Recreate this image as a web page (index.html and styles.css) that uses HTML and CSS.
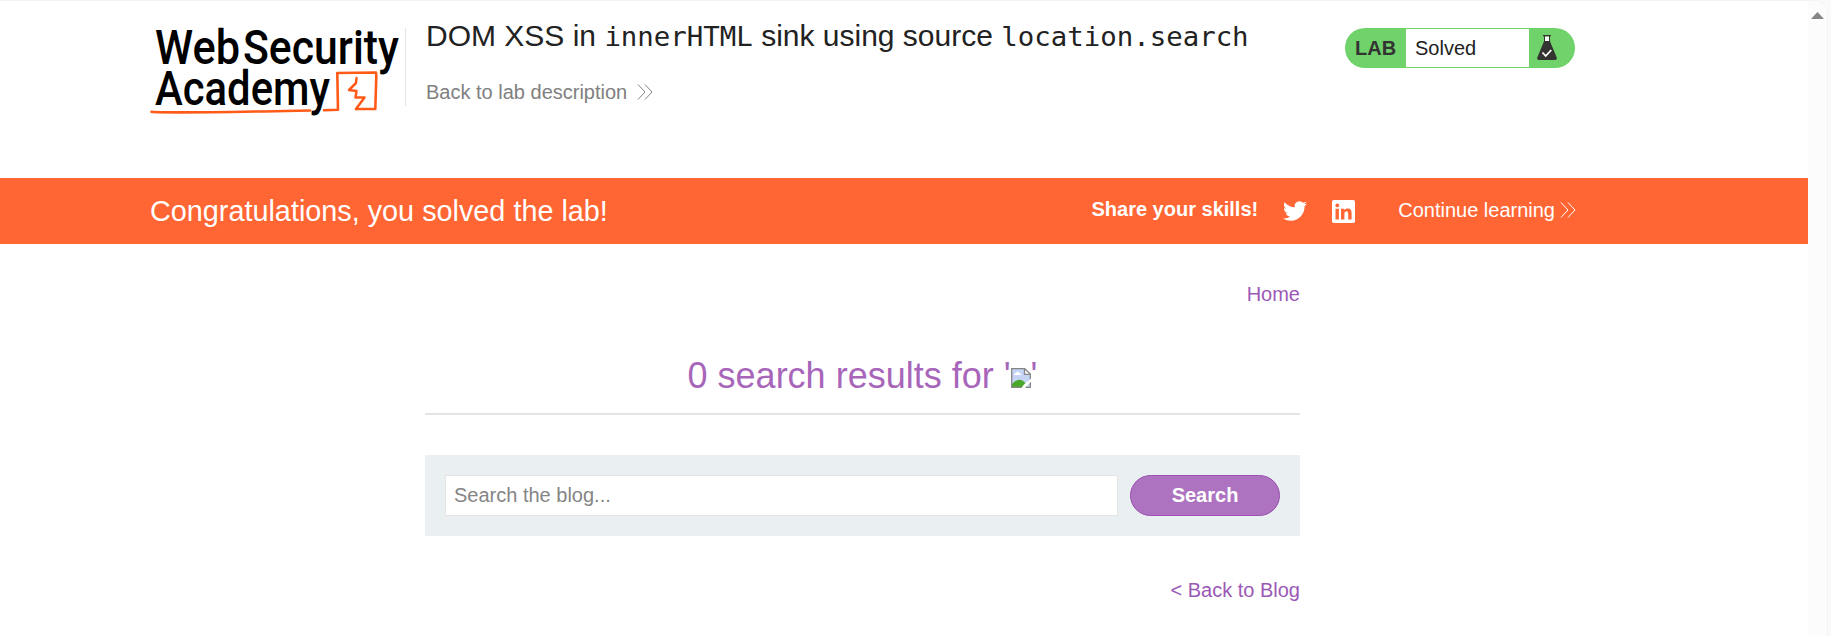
FILE: index.html
```html
<!DOCTYPE html>
<html lang="en">
<head>
<meta charset="utf-8">
<title>DOM XSS in innerHTML sink using source location.search</title>
<link rel="stylesheet" href="styles.css">
</head>
<body>
<div class="window">
  <div class="page">
    <header class="header">
      <svg class="logo" width="255" height="100" viewBox="150 20 255 100" role="img" aria-label="Web Security Academy">
        <g class="logo-text">
          <text x="155" y="64" textLength="85" lengthAdjust="spacingAndGlyphs">Web</text>
          <text x="243" y="64" textLength="156" lengthAdjust="spacingAndGlyphs">Security</text>
          <text x="155" y="105" textLength="175" lengthAdjust="spacingAndGlyphs">Academy</text>
        </g>
        <g fill="none" stroke="#ff5a17" stroke-linejoin="round" stroke-linecap="round">
          <path stroke-width="2.6" d="M151.500 111.800C165 113.500 220 112.300 310 110.500M324 110.300L338 109.800L337.300 73L376 72.500L376.300 76L375.300 109L356 109"/>
          <path stroke-width="2.500" d="M356.500 78L356 83L349 90L356.500 91L355.500 97.500L364.500 97.500L356 109"/>
        </g>
      </svg>
      <div class="title">
        <h2>DOM XSS in <code>innerHTML</code> sink using source <code>location.search</code></h2>
        <a class="back-lab">Back to lab description
          <svg width="16" height="16" viewBox="0 0 16 16"><path d="M1 .5L8 8L1 15.500M8 .5L15 8L8 15.500"/></svg>
        </a>
      </div>
      <div class="status">
        <span class="status-label">LAB</span>
        <span class="status-value">Solved</span>
        <svg class="flask" width="20" height="26" viewBox="0 0 20 26">
          <path fill="#fff" d="M7.500 1.500h5V7h-5z"/>
          <path fill="#333332" d="M6 0h8v1.300h-1V6.300l6.700 16.200q.8 2.500-1.700 2.500H2q-2.500 0-1.700-2.500L7 6.300v-5H6zM8 1.300V6h4V1.300z"/>
          <path fill="none" stroke="#fff" stroke-width="1.800" d="M5.500 17.500L8.700 21L14.300 15"/>
        </svg>
      </div>
    </header>

    <section class="banner">
      <h4>Congratulations, you solved the lab!</h4>
      <span class="share">Share your skills!</span>
      <svg class="twitter" width="24" height="22" viewBox="0 1.800 24 20.400"><path fill="#fff" d="M23.950 4.570a10 10 0 0 1-2.820.770 4.960 4.960 0 0 0 2.160-2.720c-.95.550-2 .95-3.130 1.180a4.920 4.920 0 0 0-8.380 4.480C7.690 8.090 4.070 6.130 1.640 3.160a4.820 4.820 0 0 0-.66 2.480c0 1.710.87 3.210 2.190 4.100a4.900 4.900 0 0 1-2.230-.62v.06a4.920 4.920 0 0 0 3.950 4.830 5 5 0 0 1-2.210.08 4.940 4.940 0 0 0 4.600 3.420A9.870 9.870 0 0 1 0 19.540a13.990 13.990 0 0 0 7.560 2.210c9.050 0 14-7.500 14-13.980 0-.21 0-.42-.02-.63a9.940 9.940 0 0 0 2.460-2.550z"/></svg>
      <svg class="linkedin" width="23" height="23" viewBox="0 0 23 23"><rect width="23" height="23" rx="1.700" fill="#fff"/><g fill="#ff6633"><circle cx="5.300" cy="5.400" r="1.900"/><path d="M3.500 8.700h3.400v10.800H3.500zM9 8.700h3.300v1.500c.7-1.200 1.900-1.800 3.300-1.800 3 0 4 1.800 4 4.700v6.400h-3.400v-5.700c0-1.600-.4-2.500-1.700-2.500-1.500 0-2.100 1.100-2.100 2.600v5.600H9z"/></g></svg>
      <a class="continue">Continue learning
        <svg width="16" height="16" viewBox="0 0 16 16"><path d="M1 .5L8 8L1 15.500M8 .5L15 8L8 15.500"/></svg>
      </a>
    </section>

    <main class="content">
      <a class="link home">Home</a>
      <h1>0 search results for '<svg class="missing" width="20" height="20" viewBox="0 0 20 20"><path fill="#c6d5f5" d="M.7.7h13L19.300 6v13.300H.7z"/><path fill="#fff" d="M3 7q0-2 2-2 .8-1.700 2.500-1 1.300.4 1.300 1.500Q11 6 10.500 7zM13.500 1v5.500H19z"/><path fill="#48a92b" d="M1 19v-3q4-5 9-4 4 1 6 7z"/><path fill="none" stroke="#858585" stroke-width="1.300" d="M.7.7h13L19.300 6v13.300H.7zM13.500.7V6.300h5.800"/><path fill="#fff" d="M20 10.500v3L14 20h-3.500l2-3z"/></svg>'</h1>
      <form class="search">
        <input type="text" placeholder="Search the blog...">
        <button type="button">Search</button>
      </form>
      <a class="link">&lt; Back to Blog</a>
    </main>
  </div>
  <div class="scrollbar"><svg width="13" height="7" viewBox="0 0 13 7"><path fill="#858585" d="M6.500 0L13 7H0z"/></svg></div>
</div>
</body>
</html>
```
FILE: styles.css
```css
* { box-sizing: border-box; }

body {
  margin: 0;
  height: 636px;
  overflow: hidden;
  background: #fafafa;
  color: #222;
  font: 20px/30px "Liberation Sans", Arial, sans-serif;
}

h1, h2, h4 { margin: 0; font-weight: 400; }

.window {
  display: flex;
  width: 1828px;
  height: 640px;
  border: 1px solid #f4f4f4;
  border-left: 0;
  border-top-right-radius: 14px;
  background: #fff;
  overflow: hidden;
}

.page { width: 1808px; }

.scrollbar {
  flex: 1;
  padding: 11px 0 0 3px;
  background: #fcfcfc;
  line-height: 0;
}

.header {
  display: flex;
  height: 177px;
  padding: 0 233px 0 150px;
}

.logo { margin-top: 19px; overflow: visible; }

.logo-text {
  font-family: Roboto, sans-serif;
  font-size: 48.5px;
  font-weight: 500;
  fill: #000;
}

.title {
  flex: 1;
  display: flex;
  flex-direction: column;
  gap: 21px;
  height: 78px;
  margin-top: 27px;
  padding-left: 20px;
  border-left: 1px solid #e5e5e5;
}

.title h2 {
  margin-top: -12px;
  font-size: 30px;
  line-height: 40px;
  white-space: nowrap;
}

.title code {
  font-family: "DejaVu Sans Mono", monospace;
  font-size: 27.4px;
  line-height: 1;
}

.back-lab, .continue { display: flex; align-items: center; }
.back-lab { gap: 10px; color: #808080; }
.back-lab svg, .continue svg { fill: none; stroke: currentColor; }

.status {
  display: flex;
  align-items: center;
  width: 230px;
  height: 40px;
  margin-top: 27px;
  border-radius: 20px;
  background: #6fd26b;
  color: #333332;
}

.status-label { width: 61px; padding-left: 10px; font-weight: 700; }

.status-value {
  width: 123px;
  height: 38px;
  padding-left: 9px;
  background: #fff;
  color: #222;
  line-height: 38px;
}

.flask { margin-left: 8px; }

.banner {
  display: flex;
  align-items: center;
  height: 66px;
  padding: 0 232px 0 150px;
  background: #ff6633;
  color: #fff;
}

.banner h4 { flex: 1; font-size: 28.8px; }
.share { padding-bottom: 4px; font-weight: 700; }
.twitter { margin-left: 25px; }
.linkedin { margin-left: 25px; }
.continue { margin-left: 43px; padding-bottom: 2px; gap: 5px; }

.content {
  display: flex;
  flex-direction: column;
  width: 875px;
  margin: 35px 0 0 425px;
}

.link { align-self: flex-end; color: #9b59b6; }

.content h1 {
  margin-top: 42px;
  padding-bottom: 12px;
  border-bottom: 2px solid #e4e4e4;
  color: #a866ba;
  font-size: 36px;
  line-height: 50px;
  text-align: center;
}

.search {
  display: flex;
  gap: 12px;
  height: 81px;
  margin: 40px 0 39px;
  padding: 20px;
  background: #eaeff2;
}

.search input {
  flex: 1;
  min-width: 0;
  padding: 0 8px 2px;
  border: 1px solid #e4e4e4;
  background: #fff;
  font: inherit;
}

.search input::placeholder { color: #858585; }

.search button {
  width: 150px;
  padding: 0 0 2px;
  border: 1px solid #9b50b2;
  border-radius: 21px;
  background: #ad73c0;
  color: #fff;
  font: inherit;
  font-weight: 700;
}
```
